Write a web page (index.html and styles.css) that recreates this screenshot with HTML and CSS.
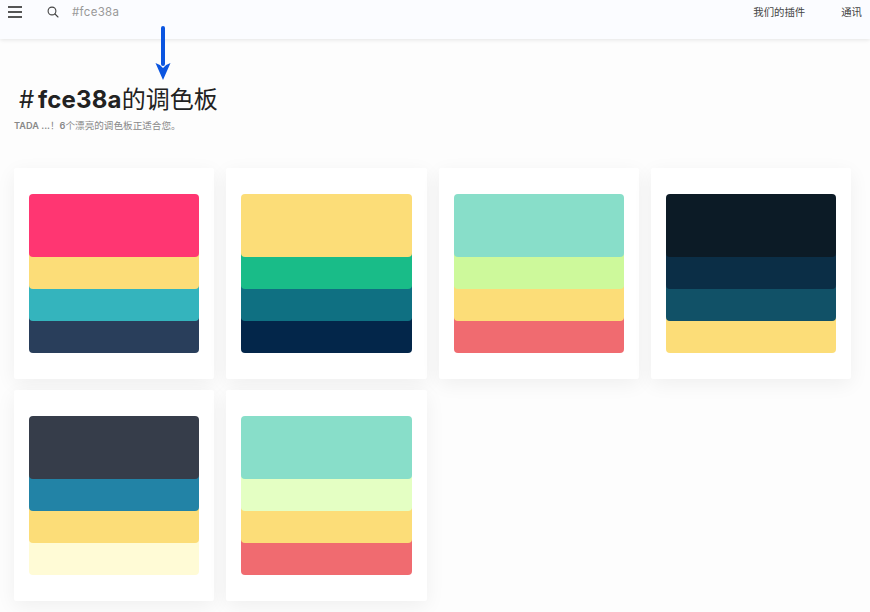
FILE: index.html
```html
<!DOCTYPE html>
<html lang="zh">
<head>
    <meta charset="UTF-8">
    <title>#fce38a的调色板</title>
    <link rel="stylesheet" href="styles.css">
</head>
<body>
    <header class="topbar">
        <div class="menu-icon"><span></span><span></span><span></span></div>
        <svg class="search-icon" width="12" height="12" viewBox="0 0 12 12" fill="none" stroke="#444" stroke-width="1.1">
            <circle cx="5" cy="5" r="3.9"/>
            <path d="M8 8l3 3" stroke-linecap="round"/>
        </svg>
        <div class="search-text">#fce38a</div>
        <nav class="nav">
            <a class="nav-link">我们的插件</a>
            <a class="nav-link">通讯</a>
        </nav>
    </header>

    <!-- 蓝色箭头 -->
    <svg class="arrow" width="18" height="56" viewBox="0 0 18 56">
        <path d="M9 3v36" stroke="#0b55e0" stroke-width="4" stroke-linecap="round"/>
        <path d="M1.5 38q5 1.500 7.500 5q2.500-3.500 7.500-5l-7.500 17z" fill="#0b55e0"/>
    </svg>

    <section class="intro">
        <h1 class="title"># <b>fce38a</b>的调色板</h1>
        <p class="subtitle"><b>TADA ...</b>！<b>6</b>个漂亮的调色板正适合您。</p>
    </section>

    <main class="palettes">
        <div class="card"><div class="swatch">
            <div class="band c-pink"></div><div class="band c-yellow"></div><div class="band c-teal"></div><div class="band c-navy"></div>
        </div></div>
        <div class="card"><div class="swatch">
            <div class="band c-yellow"></div><div class="band c-green"></div><div class="band c-petrol"></div><div class="band c-midnight"></div>
        </div></div>
        <div class="card"><div class="swatch">
            <div class="band c-mint"></div><div class="band c-lime"></div><div class="band c-yellow"></div><div class="band c-red"></div>
        </div></div>
        <div class="card"><div class="swatch">
            <div class="band c-black"></div><div class="band c-deep"></div><div class="band c-sea"></div><div class="band c-yellow"></div>
        </div></div>
        <div class="card"><div class="swatch">
            <div class="band c-slate"></div><div class="band c-blue"></div><div class="band c-yellow"></div><div class="band c-cream"></div>
        </div></div>
        <div class="card"><div class="swatch">
            <div class="band c-mint"></div><div class="band c-pale"></div><div class="band c-yellow"></div><div class="band c-red"></div>
        </div></div>
    </main>
</body>
</html>
```

FILE: styles.css
```css
body {
    margin: 0;
    height: 612px;
    overflow: hidden;
    background-color: #fdfdfd;
    color: #222;
    font-family: Inter, "Noto Sans CJK SC", sans-serif;
}
.topbar {
    display: flex;
    align-items: center;
    height: 24px;
    padding: 0 8px 15px 8px;
    background-color: #fbfcff;
    box-shadow: 0 1px 4px rgba(0,0,0,0.1);
}
.menu-icon {
    display: flex;
    flex-direction: column;
    gap: 3px;
    width: 14px;
}
.menu-icon span {
    display: block;
    height: 2px;
    background-color: #555;
}
.search-icon {
    margin-left: 25px;
}
.search-text {
    margin-left: 13px;
    font-size: 11.500px;
    letter-spacing: 0.3px;
    color: #999;
}
.nav {
    display: flex;
    gap: 36px;
    margin-left: auto;
    margin-bottom: 2px;
}
.nav-link {
    font-size: 10.400px;
    color: #444;
}
.arrow {
    position: absolute;
    left: 154px;
    top: 25px;
}
.intro {
    padding: 47px 14px 0 14px;
}
.title {
    margin: 0 0 0 5px;
    font-size: 24px;
    line-height: 28px;
    font-weight: normal;
    word-spacing: -3px;
    color: #222;
}
.title b {
    letter-spacing: 0.2px;
}
.subtitle {
    margin: 6px 0 0 0;
    font-size: 9.600px;
    line-height: 12px;
    color: #888;
}
.subtitle b {
    font-size: 9.200px;
    font-weight: 600;
}
.palettes {
    display: grid;
    grid-template-columns: repeat(4, 1fr);
    gap: 11px 12px;
    margin-top: 36px;
    padding: 0 19px 0 14px;
}
.card {
    padding: 26px 15px;
    background-color: #fff;
    border-radius: 2px;
    box-shadow: 0 5px 20px rgba(0,0,0,0.06);
}
.band {
    position: relative;
    height: 38px;
    margin-top: -6px;
    border-radius: 4px;
}
.band:nth-child(1) { height: 63px; margin-top: 0; z-index: 4; }
.band:nth-child(2) { z-index: 3; }
.band:nth-child(3) { z-index: 2; }
.band:nth-child(4) { z-index: 1; }

.c-pink { background-color: #ff3672; }
.c-yellow { background-color: #fcdd78; }
.c-teal { background-color: #34b4bd; }
.c-navy { background-color: #293e5b; }
.c-green { background-color: #19bc88; }
.c-petrol { background-color: #0f7082; }
.c-midnight { background-color: #03264a; }
.c-mint { background-color: #88dec9; }
.c-lime { background-color: #cdf99b; }
.c-red { background-color: #f06b70; }
.c-black { background-color: #0c1b26; }
.c-deep { background-color: #0b2e46; }
.c-sea { background-color: #115167; }
.c-slate { background-color: #363d4a; }
.c-blue { background-color: #2283a6; }
.c-cream { background-color: #fffbd6; }
.c-pale { background-color: #e4ffc3; }
```
